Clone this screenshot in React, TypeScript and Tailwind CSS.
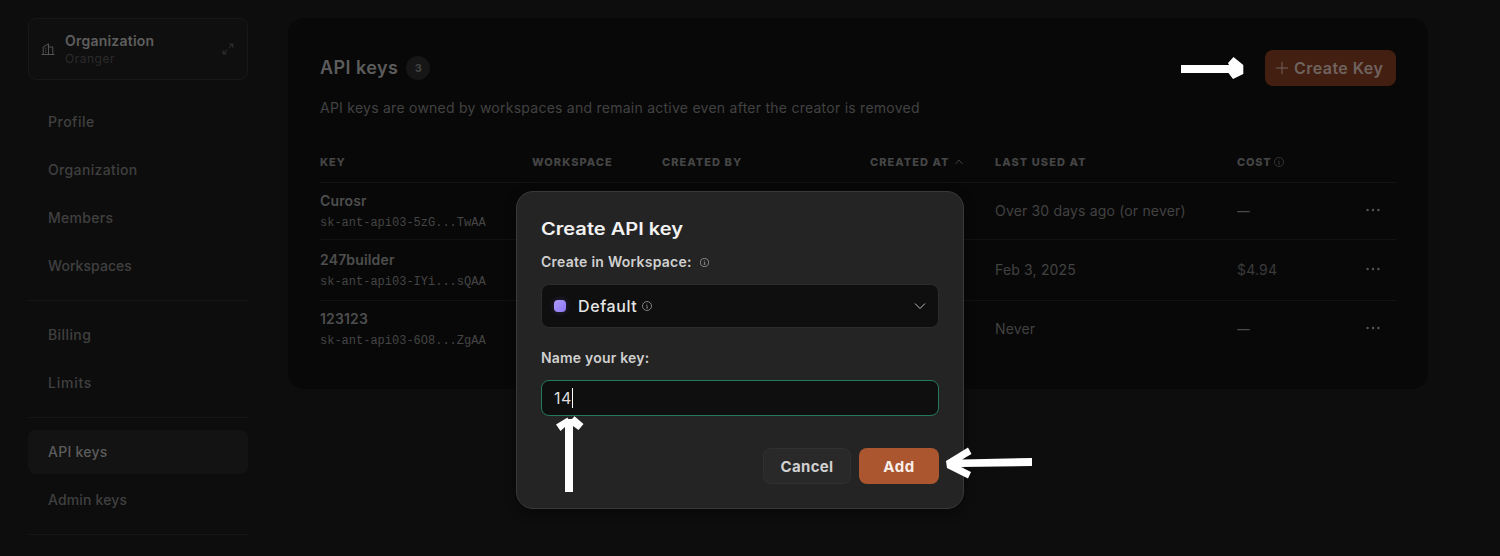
import React from "react";

type ApiKey = { name: string; secret: string; lastUsed: string; cost: string };

const keys: ApiKey[] = [
  { name: "Curosr", secret: "sk-ant-api03-5zG...TwAA", lastUsed: "Over 30 days ago (or never)", cost: "—" },
  { name: "247builder", secret: "sk-ant-api03-IYi...sQAA", lastUsed: "Feb 3, 2025", cost: "$4.94" },
  { name: "123123", secret: "sk-ant-api03-6O8...ZgAA", lastUsed: "Never", cost: "—" },
];

function InfoIcon({ className = "" }: { className?: string }) {
  return (
    <svg viewBox="0 0 12 12" fill="none" stroke="currentColor" strokeWidth="0.9" className={className}>
      <circle cx="6" cy="6" r="5.4" />
      <path d="M5.1 5.3H6.1V8.3M5 8.4H7.2" strokeWidth="0.8" />
      <circle cx="6" cy="3.6" r="0.5" fill="currentColor" stroke="none" />
    </svg>
  );
}

function BuildingIcon() {
  return (
    <svg viewBox="0 0 14 14" fill="none" stroke="currentColor" strokeWidth="0.9" className="h-3.5 w-3.5 text-[#5a5a5a]">
      <path d="M0.5 12.5H13.5M2.2 12.5V5L7.5 1.8V12.5M7.5 5H11.8V12.5" />
      <path d="M4.2 6.2H5.4M4.2 8.3H5.4M4.2 10.4H5.4" />
    </svg>
  );
}

function ExpandIcon() {
  return (
    <svg viewBox="0 0 12 12" fill="none" stroke="currentColor" strokeWidth="0.8" className="h-3 w-3 text-[#3d3d3d]">
      <path d="M7.3 1.2H10.8V4.7M10.8 1.2L6.9 5.1M4.7 10.8H1.2V7.3M1.2 10.8L5.1 6.9" />
    </svg>
  );
}

function NavItem({ label, active = false, tracking = "" }: { label: string; active?: boolean; tracking?: string }) {
  return (
    <a
      className={`flex h-11 items-center rounded-lg px-5 text-sm font-medium ${tracking} ${
        active ? "bg-[#131313] text-[#5c5c5c]" : "text-[#404040]"
      }`}
    >
      {label}
    </a>
  );
}

function Sidebar() {
  return (
    <aside className="w-[220px] shrink-0">
      <div className="flex h-[62px] items-center rounded-lg border border-[#181818] bg-[#0f0f0f] pr-[13px] pl-3">
        <BuildingIcon />
        <div className="ml-2.5 flex-1">
          <div className="text-sm leading-[18px] font-semibold tracking-[0.22px] text-[#5e5e5e]">Organization</div>
          <div className="text-xs leading-[17px] tracking-[0.5px] text-[#2b2b2b]">Oranger</div>
        </div>
        <ExpandIcon />
      </div>
      <nav className="mt-5">
        <div className="flex flex-col gap-1">
          <NavItem label="Profile" tracking="tracking-[0.5px]" />
          <NavItem label="Organization" tracking="tracking-[0.35px]" />
          <NavItem label="Members" tracking="tracking-[0.3px]" />
          <NavItem label="Workspaces" tracking="tracking-[0.05px]" />
        </div>
        <hr className="my-3 border-[#161616]" />
        <div className="flex flex-col gap-1">
          <NavItem label="Billing" tracking="tracking-[0.4px]" />
          <NavItem label="Limits" tracking="tracking-[0.75px]" />
        </div>
        <hr className="my-3 border-[#161616]" />
        <div className="flex flex-col gap-1">
          <NavItem label="API keys" active tracking="tracking-[0.25px]" />
          <NavItem label="Admin keys" tracking="tracking-[0.15px]" />
        </div>
        <hr className="mt-3 border-[#161616]" />
      </nav>
    </aside>
  );
}

function KeyRow({ item, className }: { item: ApiKey; className: string }) {
  return (
    <div className={`grid grid-cols-[212px_130px_208px_125px_242px_1fr_30px] items-center text-sm text-[#424242] ${className}`}>
      <div>
        <div className="leading-[18px] font-semibold tracking-[0.15px] text-[#4e4e4e]">{item.name}</div>
        <div className="mt-[5px] font-['Liberation_Mono',monospace] text-xs leading-4 text-[#454545]">{item.secret}</div>
      </div>
      <div />
      <div />
      <div />
      <div className="tracking-[0.17px]">{item.lastUsed}</div>
      <div className={item.cost === "—" ? "origin-left scale-x-90 text-[#4a4a4a]" : "tracking-[0.2px] text-[#3a3a3a]"}>{item.cost}</div>
      <svg viewBox="0 0 14 4" fill="currentColor" className="-mt-0.5 h-1 w-3.5 text-[#555]">
        <circle cx="1.6" cy="2" r="1.2" />
        <circle cx="7" cy="2" r="1.2" />
        <circle cx="12.4" cy="2" r="1.2" />
      </svg>
    </div>
  );
}

function KeysPanel() {
  return (
    <main className="ml-10 h-[371px] w-[1140px] shrink-0 rounded-2xl bg-[#080808] p-8">
      <div className="flex h-9 items-center">
        <h1 className="text-lg font-semibold tracking-[0.42px] text-[#5c5c5c]">API keys</h1>
        <span className="ml-2 flex h-6 w-6 items-center justify-center rounded-full bg-[#161616] text-[11px] font-bold text-[#454545]">
          3
        </span>
        <button className="ml-auto flex h-9 w-[131px] items-center rounded-lg bg-[#431f11] pl-[11px] text-base font-semibold tracking-[0.45px] text-[#6f635f]">
          <svg viewBox="0 0 12 12" stroke="currentColor" strokeWidth="1" className="mr-1.5 h-3 w-3">
            <path d="M6 0V12M0 6H12" />
          </svg>
          Create Key
        </button>
      </div>
      <p className="mt-3 text-sm leading-5 tracking-[0.25px] text-[#424242]">
        API keys are owned by workspaces and remain active even after the creator is removed
      </p>
      <div className="mt-6 grid h-[41px] grid-cols-[212px_130px_208px_125px_242px_1fr] items-center border-b border-[#131313] text-[11px] font-extrabold tracking-[1.05px] text-[#454545]">
        <span className="tracking-[0.8px]">KEY</span>
        <span>WORKSPACE</span>
        <span>CREATED BY</span>
        <span className="flex items-center">
          CREATED AT
          <svg viewBox="0 0 8 8" fill="none" stroke="currentColor" strokeWidth="0.9" className="ml-[5px] h-2 w-2">
            <path d="M0.5 6L4 2L7.5 6" />
          </svg>
        </span>
        <span>LAST USED AT</span>
        <span className="flex items-center tracking-[0.8px]">
          COST
          <InfoIcon className="ml-[2px] h-2.5 w-2.5" />
        </span>
      </div>
      <KeyRow item={keys[0]} className="h-[57px] border-b border-[#131313]" />
      <KeyRow item={keys[1]} className="h-[61px] border-b border-[#131313]" />
      <KeyRow item={keys[2]} className="h-[56px]" />
    </main>
  );
}

function CreateKeyDialog() {
  return (
    <div
      role="dialog"
      className="absolute top-[191px] left-[516px] h-[318px] w-[448px] rounded-[17px] border border-[#393939] bg-[#242424] p-6 shadow-[0_4px_12px_rgba(0,0,0,0.4)]"
    >
      <h2 className="origin-left scale-x-[1.18] pt-px text-[17px] leading-[25px] font-semibold text-[#f2f2f2]">Create API key</h2>
      <div className="mt-2.5 flex items-center text-sm leading-5 font-semibold tracking-[0.25px] text-[#d0d0d0]">
        Create in Workspace:
        <InfoIcon className="ml-2 h-[9px] w-[9px] text-[#b5b5b5]" />
      </div>
      <div className="mt-3 flex h-11 items-center rounded-lg border border-[#2c2c2c] bg-[#0f0f0f] pr-3 pl-3 text-base font-medium tracking-[0.6px] text-[#e5e5e5]">
        <span className="mr-3 h-3 w-3 rounded bg-linear-to-br from-[#b19cff] to-[#8c76f5] shadow-[0_0_6px_rgba(145,125,250,0.25)]" />
        Default
        <InfoIcon className="ml-[5px] h-2.5 w-2.5 text-[#a5a5a5]" />
        <svg viewBox="0 0 12 8" fill="none" stroke="currentColor" strokeWidth="1" className="ml-auto h-2 w-3 text-[#bbb]">
          <path d="M1 1.5L6 6.5L11 1.5" />
        </svg>
      </div>
      <label className="mt-5 block text-sm leading-5 font-semibold tracking-[0.2px] text-[#d0d0d0]">Name your key:</label>
      <div className="mt-3 flex h-9 items-center rounded-lg border border-[#23795a] bg-[#0f0f0f] px-3 text-base tracking-[0.4px] text-[#dedede]">
        14
        <span className="h-5 w-px bg-white" />
      </div>
      <div className="mt-8 flex justify-end gap-2 text-[15px] font-bold tracking-[0.35px]">
        <button className="h-9 w-[88px] rounded-lg border border-[#303030] bg-[#292929] pt-0.5 text-[#d0d0d0]">Cancel</button>
        <button className="h-9 w-20 rounded-lg bg-[#ab562f] pt-0.5 tracking-[0.6px] text-[#f8eeea]">Add</button>
      </div>
    </div>
  );
}

function Arrows() {
  return (
    <svg viewBox="0 0 1500 556" fill="#fff" className="pointer-events-none absolute top-0 left-0 h-[556px] w-[1500px]">
      <path d="M1181 65H1229L1228 63L1233.5 57L1243.3 65V74L1233 79L1228.5 73H1181Z" />
      <path d="M565 492V427L560.5 431L556 424.5L567.5 417.5L568 419H572L574.5 416.3L583.5 424L578.5 430L573 426V492Z" />
      <path d="M1032 458V466L961 467L971 472L968 478.5L947 468L946 461L968 447.5L971.5 454L962 459.5Z" />
    </svg>
  );
}

export default function App() {
  return (
    <div className="relative h-[556px] w-[1500px] overflow-hidden bg-[#0d0d0d] font-['Inter','Liberation_Sans',sans-serif]">
      <div className="flex pt-[18px] pl-7">
        <Sidebar />
        <KeysPanel />
      </div>
      <CreateKeyDialog />
      <Arrows />
    </div>
  );
}
